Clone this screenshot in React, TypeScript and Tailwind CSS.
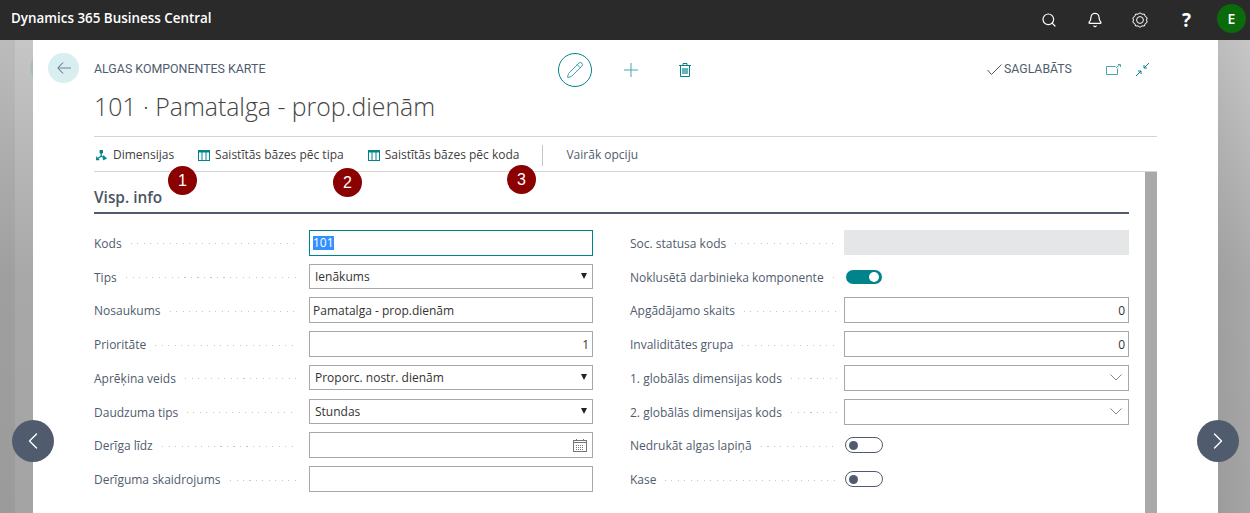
import React from 'react';
import { ChevronLeft, ChevronRight, Pencil, Search, Bell } from 'lucide-react';

const leftRows = [
    { label: 'Kods', kind: 'focus', value: '101' },
    { label: 'Tips', kind: 'select', value: 'Ienākums' },
    { label: 'Nosaukums', kind: 'text', value: 'Pamatalga - prop.dienām' },
    { label: 'Prioritāte', kind: 'number', value: '1' },
    { label: 'Aprēķina veids', kind: 'select', value: 'Proporc. nostr. dienām' },
    { label: 'Daudzuma tips', kind: 'select', value: 'Stundas' },
    { label: 'Derīga līdz', kind: 'date', value: '' },
    { label: 'Derīguma skaidrojums', kind: 'text', value: '' },
];

const rightRows = [
    { label: 'Soc. statusa kods', kind: 'disabled', value: '' },
    { label: 'Noklusētā darbinieka komponente', kind: 'on', value: '' },
    { label: 'Apgādājamo skaits', kind: 'number', value: '0' },
    { label: 'Invaliditātes grupa', kind: 'number', value: '0' },
    { label: '1. globālās dimensijas kods', kind: 'lookup', value: '' },
    { label: '2. globālās dimensijas kods', kind: 'lookup', value: '' },
    { label: 'Nedrukāt algas lapiņā', kind: 'off', value: '' },
    { label: 'Kase', kind: 'off', value: '' },
];

function TableIcon() {
    return (
        <svg width="12" height="11" viewBox="0 0 12 11" fill="none" className="shrink-0">
            <rect x="0.5" y="0.5" width="11" height="10" stroke="#00838a" />
            <rect x="0" y="0" width="12" height="2.500" fill="#00838a" />
            <path d="M4 2v8M8 2v8" stroke="#00838a" />
        </svg>
    );
}

function DimensionIcon() {
    return (
        <svg width="11" height="11" viewBox="0 0 11 11" fill="#00838a" stroke="#00838a" className="shrink-0">
            <path d="M4 .5h2.500v2.500h-2.500z" strokeWidth="1" />
            <path d="M5.200 3v3.200l-3.400 2.300M5.200 6.200l3.400 1.600" fill="none" strokeWidth="1.300" />
            <path d="M.3 6.500l3 3.500h-3.200zM7.500 5.500l3.300 3-3.800 1.500z" strokeWidth="0.500" />
        </svg>
    );
}

function GearIcon() {
    return (
        <svg width="16" height="16" viewBox="0 0 16 16" fill="none" stroke="white" strokeWidth="1">
            <path d="M8 .8l2 1.400 2.400-.1.800 2.300 2 1.400-.7 2.300.7 2.200-2 1.400-.8 2.300-2.400-.1-2 1.400-2-1.400-2.400.1-.8-2.300-2-1.400.7-2.200-.7-2.300 2-1.400.8-2.300 2.400.1z" />
            <circle cx="8" cy="8" r="3.400" />
        </svg>
    );
}

function CalendarIcon() {
    return (
        <svg width="14" height="13" viewBox="0 0 14 13" fill="none" stroke="#777" className="shrink-0">
            <rect x="0.5" y="1.500" width="13" height="11" />
            <path d="M0.5 3.500h13M3.500 0v2M10.500 0v2" />
            <path d="M3 6.500h8M3 8.500h8M3 10.500h8" strokeDasharray="1 1" />
        </svg>
    );
}

function TrashIcon() {
    return (
        <svg width="12" height="14" viewBox="0 0 12 14" fill="none" stroke="#00838a">
            <path d="M0 2.500h12M4 2V.5h4V2" />
            <path d="M1.500 2.500v11h9v-11" />
            <path d="M4 5v6M6 5v6M8 5v6" strokeWidth="1.200" />
        </svg>
    );
}

function Field({ kind, value }: { kind: string; value: string }) {
    if (kind === 'on') {
        return (
            <div className="ml-[2px] flex h-[14px] w-9 items-center justify-end rounded-full bg-[#00838a] pr-[3px]">
                <div className="h-[10px] w-[10px] rounded-full bg-white" />
            </div>
        );
    }
    if (kind === 'off') {
        return (
            <div className="ml-[1px] flex h-4 w-[38px] items-center rounded-full border border-[#505c6d] pl-[3px]">
                <div className="h-[9px] w-[9px] rounded-full bg-[#505c6d]" />
            </div>
        );
    }
    if (kind === 'disabled') {
        return <div className="h-[25px] w-full bg-[#e5e6e8]" />;
    }
    if (kind === 'focus') {
        return (
            <div className="flex h-[26px] w-full items-center border border-[#00838a] pl-[3px] text-[12px] text-white">
                <span className="bg-[#3390ff] font-medium leading-[14px]">{value}</span>
            </div>
        );
    }
    return (
        <div
            className={`flex w-full items-center justify-between border border-[#a8a8a8] text-[12px] text-[#333] ${
                kind === 'select' ? 'h-[25px] pl-[5px] pr-[5px]' : 'h-[26px] pl-[3px] pr-[3px]'
            }`}
        >
            {kind === 'number' && <span />}
            {value && <span className="mt-[1px]">{value}</span>}
            {kind === 'select' && (
                <svg width="6" height="6" viewBox="0 0 6 6" fill="#222" className="mb-[1px]">
                    <path d="M0 0h6L3 6z" />
                </svg>
            )}
            {kind === 'date' && (
                <>
                    <span />
                    <span className="pr-[2px]"><CalendarIcon /></span>
                </>
            )}
            {kind === 'lookup' && (
                <>
                    <span />
                    <svg width="12" height="7" viewBox="0 0 12 7" fill="none" stroke="#888" className="mr-[3px]">
                        <path d="M.5 .5L6 6l5.500-5.500" />
                    </svg>
                </>
            )}
        </div>
    );
}

function Row({ label, kind, value, right }: { label: string; kind: string; value: string; right?: boolean }) {
    return (
        <div className="flex h-[33.75px] items-center">
            <div className={`flex items-center ${right ? 'w-[214px]' : 'w-[215px]'}`}>
                <span className="mt-[2px] shrink-0 text-[12px] text-[#505c6d]">{label}</span>
                <div
                    className={`ml-[9px] mt-[2px] h-px flex-1 bg-[repeating-linear-gradient(90deg,#c4c4c4_0,#c4c4c4_1px,transparent_1px,transparent_6.5px)] ${
                        right ? 'mr-[6px]' : 'mr-[12px]'
                    }`}
                />
            </div>
            <div className={`flex items-center ${right ? 'w-[285px]' : 'w-[284px]'}`}>
                <Field kind={kind} value={value} />
            </div>
        </div>
    );
}

function Marker({ n, className }: { n: number; className: string }) {
    return (
        <div className={`absolute flex h-[29px] w-[29px] items-center justify-center rounded-full bg-[#8b0000] font-['Liberation_Sans',sans-serif] text-[16px] text-white ${className}`}>
            {n}
        </div>
    );
}

export default function App() {
    return (
        <div className="relative flex h-[513px] w-[1250px] flex-col overflow-hidden font-['Open_Sans','Noto_Sans',sans-serif]">
            {/* top bar */}
            <header className="flex h-10 shrink-0 items-center justify-between bg-[#2a2a2a] pl-[11px] pr-[4px] text-white">
                <span className="mb-[3px] text-[13.4px] font-semibold">Dynamics 365 Business Central</span>
                <div className="flex items-center">
                    <Search className="mr-[30px] h-4 w-4" strokeWidth={1.8} />
                    <Bell className="mr-[29px] h-4 w-4" strokeWidth={1.8} />
                    <GearIcon />
                    <span className="ml-[34px] mr-[27px] w-2 text-[19px] font-bold leading-none">?</span>
                    <div className="mb-[3px] flex h-[29px] w-[29px] items-center justify-center rounded-full bg-[#0b6a0b] text-[14px] font-semibold">E</div>
                </div>
            </header>

            <div className="flex min-h-0 flex-1 bg-gradient-to-b from-[#c6c6c6] via-[#a8a8a8] to-[#a4a4a4]">
                <div className="relative flex w-[33px] shrink-0 overflow-hidden">
                    <div className="w-[15px] bg-black/5" />
                    <div className="absolute left-[30px] top-[13px] h-[30px] w-[30px] rounded-full bg-[#a8bcc0]" />
                </div>
                <main className="flex w-[1185px] shrink-0 flex-col bg-white">
                    {/* page header */}
                    <div className="flex h-[96px] shrink-0">
                        <div className="flex w-[61px] shrink-0 pl-[15px] pt-[13px]">
                            <div className="flex h-[30px] w-[31px] items-center justify-center rounded-full bg-[#d8eef1]">
                                <svg width="14" height="12" viewBox="0 0 14 12" fill="none">
                                    <path d="M2 6h12" stroke="#8fa8ae" strokeWidth="1.500" />
                                    <path d="M6 .5L.8 6 6 11.500" stroke="#505c6d" />
                                </svg>
                            </div>
                        </div>
                        <div className="flex-1">
                            <div className="flex h-[51px] items-start pt-[13px]">
                                <div className="w-[464px] pt-[7px] font-['Roboto',sans-serif] text-[12.4px] leading-[18px] text-[#505c6d]">ALGAS KOMPONENTES KARTE</div>
                                <div className="flex items-center">
                                    <div className="flex h-[34px] w-[34px] items-center justify-center rounded-full border border-[#00838a]">
                                        <Pencil className="h-[18px] w-[18px] text-[#00838a]" strokeWidth={1} />
                                    </div>
                                    <svg width="14" height="14" viewBox="0 0 14 14" stroke="#4ba6ab" className="ml-[32px]">
                                        <path d="M7 0v14M0 7h14" />
                                    </svg>
                                    <span className="ml-[41px]"><TrashIcon /></span>
                                </div>
                                <div className="ml-[296px] flex items-center pt-[7px]">
                                    <svg width="15" height="11" viewBox="0 0 15 11" fill="none" stroke="#505c6d">
                                        <path d="M.5 6l4 4.500L14.500 .5" />
                                    </svg>
                                    <span className="ml-[2px] w-[69px] font-['Roboto',sans-serif] text-[12.3px] leading-[18px] text-[#505c6d]">SAGLABĀTS</span>
                                    <svg width="15" height="11" viewBox="0 0 15 11" fill="none" stroke="#4ba6ab" className="ml-[33px]">
                                        <path d="M11.500 4.500v6H.5v-8h9" />
                                        <path d="M10 4l4-3.500M14.500 .5h-2.500M14.500 .5v2.500" />
                                    </svg>
                                    <svg width="15" height="15" viewBox="0 0 15 15" fill="none" stroke="#00838a" className="ml-[14px]">
                                        <path d="M14 1L9 6M9 3v3h3M1 14l5-5M3 9h3v3" />
                                    </svg>
                                </div>
                            </div>
                            <h1 className="text-[24.8px] font-light leading-[30px] text-[#444]">101 · Pamatalga - prop.dienām</h1>
                        </div>
                    </div>

                    {/* action bar */}
                    <div className="ml-[61px] mr-[61px] flex h-[36px] shrink-0 items-center border-y border-[#d4d4d4] pt-[2px] text-[12px] text-[#404040]">
                        <div className="ml-[2px] flex items-center gap-[6px]">
                            <DimensionIcon />
                            <span>Dimensijas</span>
                        </div>
                        <div className="ml-[24px] flex items-center gap-[5px]">
                            <TableIcon />
                            <span>Saistītās bāzes pēc tipa</span>
                        </div>
                        <div className="ml-[24px] flex items-center gap-[5px]">
                            <TableIcon />
                            <span>Saistītās bāzes pēc koda</span>
                        </div>
                        <div className="ml-[23px] h-[21px] w-px bg-[#c4c4c4]" />
                        <span className="ml-[23px] text-[#505c6d]">Vairāk opciju</span>
                    </div>

                    {/* form */}
                    <div className="flex min-h-0 flex-1">
                        <div className="w-[61px] shrink-0" />
                        <div className="flex w-[1035px] shrink-0 flex-col">
                            <div className="flex h-[42px] shrink-0 items-end border-b-2 border-[#505c6d]">
                                <span className="pb-[3px] text-[15.4px] font-semibold text-[#4a5462]">Visp. info</span>
                            </div>
                            <div className="flex pt-[12px]">
                                <div className="w-[499px]">
                                    {leftRows.map((r) => (
                                        <Row key={r.label} {...r} />
                                    ))}
                                </div>
                                <div className="ml-[37px] w-[499px]">
                                    {rightRows.map((r) => (
                                        <Row key={r.label} {...r} right />
                                    ))}
                                </div>
                            </div>
                        </div>
                        <div className="ml-[16px] w-3 shrink-0 bg-[#a9a9a9]" />
                    </div>
                </main>
                <div className="flex-1 bg-gradient-to-r from-black/5 to-transparent" />
            </div>

            {/* markers and pager float over the page */}
            <Marker n={1} className="left-[168px] top-[166px]" />
            <Marker n={2} className="left-[333px] top-[168px]" />
            <Marker n={3} className="left-[507px] top-[165px]" />
            <button className="absolute left-[12px] top-[420px] flex h-[42px] w-[42px] items-center justify-center rounded-full bg-[#505c6d] text-white">
                <ChevronLeft className="h-7 w-7" strokeWidth={1.2} />
            </button>
            <button className="absolute left-[1197px] top-[420px] flex h-[42px] w-[42px] items-center justify-center rounded-full bg-[#505c6d] text-white">
                <ChevronRight className="h-7 w-7" strokeWidth={1.2} />
            </button>
        </div>
    );
}
